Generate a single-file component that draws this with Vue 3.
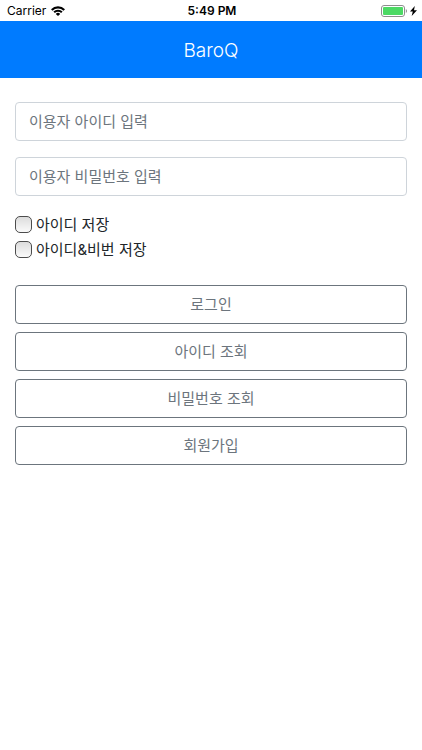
<script setup>
import { reactive } from 'vue'

const form = reactive({ id: '', password: '', saveId: false, saveBoth: false })
const actions = ['아이디 조회', '비밀번호 조회', '회원가입']
</script>

<template>
  <div class="app">
    <div class="status">
      <div class="carrier">
        <span>Carrier</span>
        <svg class="wifi" viewBox="0 0 14 10" aria-hidden="true">
          <path d="M0 3.200a9.900 9.900 0 0 1 14 0L12.500 4.800a7.800 7.800 0 0 0-11 0z" />
          <path d="M2.400 5.600a6.500 6.500 0 0 1 9.200 0L10.100 7.100a4.400 4.400 0 0 0-6.200 0z" />
          <path d="M4.800 7.900a3.100 3.100 0 0 1 4.400 0L7 10z" />
        </svg>
      </div>
      <span class="time">5:49 PM</span>
      <div class="power">
        <svg class="battery" viewBox="0 0 26 12" aria-hidden="true">
          <rect x="0.5" y="0.5" width="23" height="11" rx="2.5" fill="#fff" stroke="#8e8e8e" />
          <rect x="2" y="2" width="20" height="8" rx="1" fill="#4cd964" />
          <path d="M24.8 4v4c.8-.4 1.2-1.1 1.2-2s-.4-1.6-1.2-2z" fill="#8e8e8e" />
        </svg>
        <svg class="bolt" viewBox="0 0 7 10" aria-hidden="true">
          <path d="M4.8 0L0 5.600h2.800L1.700 10L7 4.200H4z" />
        </svg>
      </div>
    </div>

    <header class="navbar">
      <h1>BaroQ</h1>
    </header>

    <form class="login" @submit.prevent>
      <input v-model="form.id" class="field" type="text" placeholder="이용자 아이디 입력" aria-label="이용자 아이디 입력" />
      <input v-model="form.password" class="field" type="password" placeholder="이용자 비밀번호 입력" aria-label="이용자 비밀번호 입력" />
      <div class="checks">
        <label><input v-model="form.saveId" type="checkbox" />아이디 저장</label>
        <label><input v-model="form.saveBoth" type="checkbox" />아이디&amp;비번 저장</label>
      </div>
      <div class="buttons">
        <button type="submit">로그인</button>
        <button v-for="label in actions" :key="label" type="button">{{ label }}</button>
      </div>
    </form>
  </div>
</template>

<style>
body {
  background: #fff;
}
</style>

<style scoped>
.app,
.app * {
  box-sizing: border-box;
}
.app {
  font-family: Inter, "Noto Sans CJK KR", sans-serif;
  font-size: 15px;
  line-height: 24px;
  color: #212529;
}
.status {
  display: grid;
  grid-template-columns: 1fr auto 1fr;
  align-items: center;
  height: 21px;
  padding: 0 5px 0 7px;
  font-size: 12px;
  line-height: 21px;
  color: #000;
}
.carrier,
.power {
  display: flex;
  align-items: center;
  gap: 5px;
}
.power {
  justify-content: flex-end;
  gap: 3px;
}
.time {
  font-weight: 600;
}
.wifi {
  width: 14px;
  height: 10px;
}
.battery {
  width: 26px;
  height: 12px;
}
.bolt {
  width: 7px;
  height: 10px;
}
.navbar {
  padding: 15px 16px 13px;
  background: #007bff;
  color: #fff;
  text-align: center;
}
.navbar h1 {
  margin: 0;
  font-size: 19px;
  font-weight: 300;
  line-height: 29px;
}
.login {
  display: flex;
  flex-direction: column;
  gap: 16px;
  padding: 24px 15px;
}
.field {
  width: 100%;
  height: 39px;
  margin: 0;
  padding: 6px 13px;
  border: 1px solid #ced4da;
  border-radius: 4px;
  background: #fff;
  color: #495057;
  font: inherit;
  outline: none;
}
.field::placeholder {
  color: #6c757d;
  opacity: 1;
}
.checks {
  display: flex;
  flex-direction: column;
  align-items: flex-start;
}
.checks label {
  display: flex;
  align-items: center;
  gap: 4px;
  line-height: 25px;
}
.checks input {
  appearance: none;
  width: 17px;
  height: 17px;
  margin: 0;
  border: 1px solid #4c4c4c;
  border-radius: 5px;
  background: linear-gradient(#dcdcdc, #fafafa);
}
.checks input:checked {
  background: #007bff;
}
.buttons {
  display: flex;
  flex-direction: column;
  gap: 8px;
  padding-top: 7px;
}
.buttons button {
  height: 39px;
  padding: 6px 12px;
  border: 1px solid #6c757d;
  border-radius: 4px;
  background: transparent;
  color: #6c757d;
  font: inherit;
  text-align: center;
}
</style>
